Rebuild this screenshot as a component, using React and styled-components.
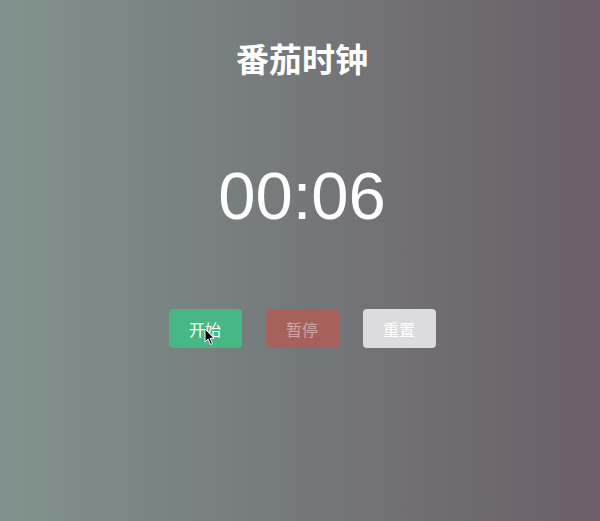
import React from "react";
import styled, { createGlobalStyle } from "styled-components";

const Global = createGlobalStyle`
  html, body { margin: 0; padding: 0; height: 100%; }
  body {
    background: linear-gradient(to right, #81938e 0%, #767b7c 45%, #6a5e68 100%);
    font-family: "Liberation Sans", "Noto Sans CJK SC", sans-serif;
    min-height: 521px;
  }
`;

const Page = styled.div`
  position: relative;
  width: 600px;
  height: 521px;
  display: flex;
  flex-direction: column;
  align-items: center;
  padding: 42px 0 0 4px;
  box-sizing: border-box;
  color: #fff;
`;

const Title = styled.h1`
  margin: 0;
  font-family: "Noto Sans CJK SC", sans-serif;
  font-size: 33px;
  line-height: 1;
  font-weight: 700;
`;

const Timer = styled.div`
  margin-top: 87px;
  font-family: "Liberation Sans", sans-serif;
  font-size: 67px;
  line-height: 1;
  height: 67px;
`;

const Buttons = styled.div`
  margin-top: 80px;
  display: flex;
  gap: 24px;
`;

const variants = {
  start: { bg: "#47b885", fg: "#ffffff" },
  pause: { bg: "#a6615d", fg: "#cfa5a2" },
  reset: { bg: "#dcdbde", fg: "#ffffff" },
};

const Button = styled.button`
  width: 73px;
  height: 39px;
  border: none;
  border-radius: 4px;
  padding: 0;
  font-family: "Noto Sans CJK SC", sans-serif;
  font-size: 16px;
  line-height: 1;
  background: ${(p) => variants[p.$kind].bg};
  color: ${(p) => variants[p.$kind].fg};
`;

const Cursor = styled.svg`
  position: absolute;
  left: 204px;
  top: 328px;
  width: 12px;
  height: 18px;
`;

export default function App() {
  return (
    <>
      <Global />
      <Page>
        <Title>番茄时钟</Title>
        <Timer>00:06</Timer>
        <Buttons>
          <Button $kind="start">开始</Button>
          <Button $kind="pause">暂停</Button>
          <Button $kind="reset">重置</Button>
        </Buttons>
        <Cursor viewBox="0 0 12 18">
          <path
            d="M1 1 L1 14 L4 11 L6.5 16.5 L8.5 15.5 L6 10.3 L10 10.3 Z"
            fill="#000"
            stroke="#fff"
            strokeWidth="1"
            strokeLinejoin="round"
          />
        </Cursor>
      </Page>
    </>
  );
}
